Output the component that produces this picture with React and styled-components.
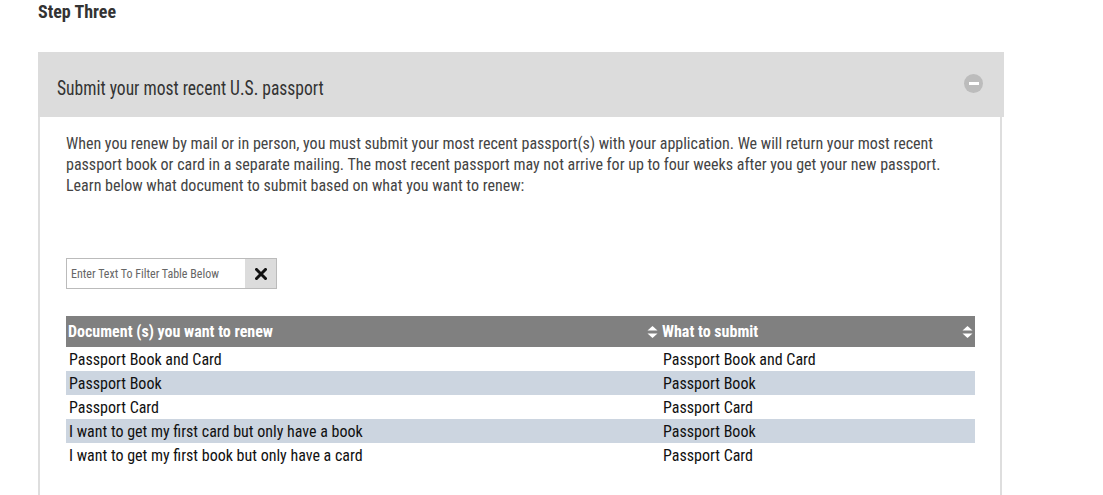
import React from "react";
import styled, { createGlobalStyle } from "styled-components";

const Global = createGlobalStyle`
  html, body { margin: 0; padding: 0; background: #fff; }
  body { font-family: "Roboto Condensed", "Liberation Sans Narrow", "Roboto", sans-serif; }
  * { box-sizing: border-box; }
`;

const Page = styled.div`
  padding: 0 99px 0 38px;
  width: 1103px;
`;

const StepTitle = styled.h3`
  margin: 0;
  padding-top: 2px;
  height: 52px;
  font-size: 18px;
  line-height: 20px;
  font-weight: 700;
  color: #333;
`;

const Panel = styled.section`
  width: 966px;
`;

const PanelHeader = styled.div`
  height: 65px;
  background: #dcdcdc;
  display: flex;
  align-items: center;
  justify-content: space-between;
  padding: 0 21px 0 19px;
`;

const PanelTitle = styled.h2`
  margin: 0;
  font-size: 21px;
  font-weight: 400;
  color: #333;
  padding-top: 6px;
  transform: scaleX(0.835);
  transform-origin: left center;
  white-space: nowrap;
`;

const ToggleIcon = styled.span`
  width: 19px;
  height: 19px;
  border-radius: 50%;
  background: #bcbcbc;
  display: flex;
  align-items: center;
  justify-content: center;
  margin-top: -2px;
  &::after {
    content: "";
    width: 10px;
    height: 3px;
    background: #fff;
  }
`;

const PanelBody = styled.div`
  border-left: 2px solid #dedede;
  border-right: 2px solid #dedede;
  margin-right: 2px;
  padding: 16px 26px 28px 26px;
`;

const Intro = styled.p`
  margin: 0 0 62px 0;
  font-size: 16px;
  line-height: 21px;
  color: #444;
  max-width: 890px;
`;

const Filter = styled.div`
  display: flex;
  width: 211px;
  height: 31px;
  border: 1px solid #bbb;
  margin-bottom: 27px;
`;

const FilterInput = styled.input`
  flex: 1;
  min-width: 0;
  border: none;
  outline: none;
  padding: 0 4px;
  font-family: inherit;
  font-size: 12px;
  color: #555;
  &::placeholder { color: #666; }
`;

const ClearButton = styled.button`
  width: 31px;
  border: none;
  background: #dcdcdc;
  display: flex;
  align-items: center;
  justify-content: center;
  padding: 0;
`;

const Table = styled.table`
  width: 909px;
  border-collapse: collapse;
  font-size: 16px;
`;

const Th = styled.th`
  background: #808080;
  color: #fff;
  font-weight: 700;
  text-align: left;
  height: 31px;
  padding: 0 2px;
  width: ${(p) => p.$w}px;
`;

const ThInner = styled.div`
  display: flex;
  align-items: center;
  justify-content: space-between;
`;

const Row = styled.tr`
  background: ${(p) => (p.$alt ? "#ccd5e0" : "#fff")};
`;

const Td = styled.td`
  height: 24px;
  padding: 1px 3px 0;
  color: #111;
  line-height: 23px;
`;

const SortIcon = () => (
  <svg width="11" height="14" viewBox="0 0 11 14">
    <path d="M5.5 1 L10.5 5.5 L0.5 5.5 Z" fill="#fff" />
    <path d="M0.5 8.5 L10.5 8.5 L5.5 13 Z" fill="#fff" />
  </svg>
);

const XIcon = () => (
  <svg width="12" height="12" viewBox="0 0 12 12">
    <path d="M1.5 1.5 L10.5 10.5 M10.5 1.5 L1.5 10.5" stroke="#111" strokeWidth="3" strokeLinecap="square" />
  </svg>
);

const rows = [
  ["Passport Book and Card", "Passport Book and Card"],
  ["Passport Book", "Passport Book"],
  ["Passport Card", "Passport Card"],
  ["I want to get my first card but only have a book", "Passport Book"],
  ["I want to get my first book but only have a card", "Passport Card"],
];

export default function App() {
  return (
    <>
      <Global />
      <Page>
        <StepTitle>Step Three</StepTitle>
        <Panel>
          <PanelHeader>
            <PanelTitle>Submit your most recent U.S. passport</PanelTitle>
            <ToggleIcon />
          </PanelHeader>
          <PanelBody>
            <Intro>
              When you renew by mail or in person, you must submit your most recent passport(s) with your application. We will return your most recent passport book or card in a separate mailing. The most recent passport may not arrive for up to four weeks after you get your new passport. Learn below what document to submit based on what you want to renew:
            </Intro>
            <Filter>
              <FilterInput placeholder="Enter Text To Filter Table Below" />
              <ClearButton aria-label="Clear"><XIcon /></ClearButton>
            </Filter>
            <Table>
              <thead>
                <tr>
                  <Th $w={594}>
                    <ThInner>Document (s) you want to renew <SortIcon /></ThInner>
                  </Th>
                  <Th $w={315}>
                    <ThInner>What to submit <SortIcon /></ThInner>
                  </Th>
                </tr>
              </thead>
              <tbody>
                {rows.map((r, i) => (
                  <Row key={i} $alt={i % 2 === 1}>
                    <Td>{r[0]}</Td>
                    <Td>{r[1]}</Td>
                  </Row>
                ))}
              </tbody>
            </Table>
          </PanelBody>
        </Panel>
      </Page>
    </>
  );
}
